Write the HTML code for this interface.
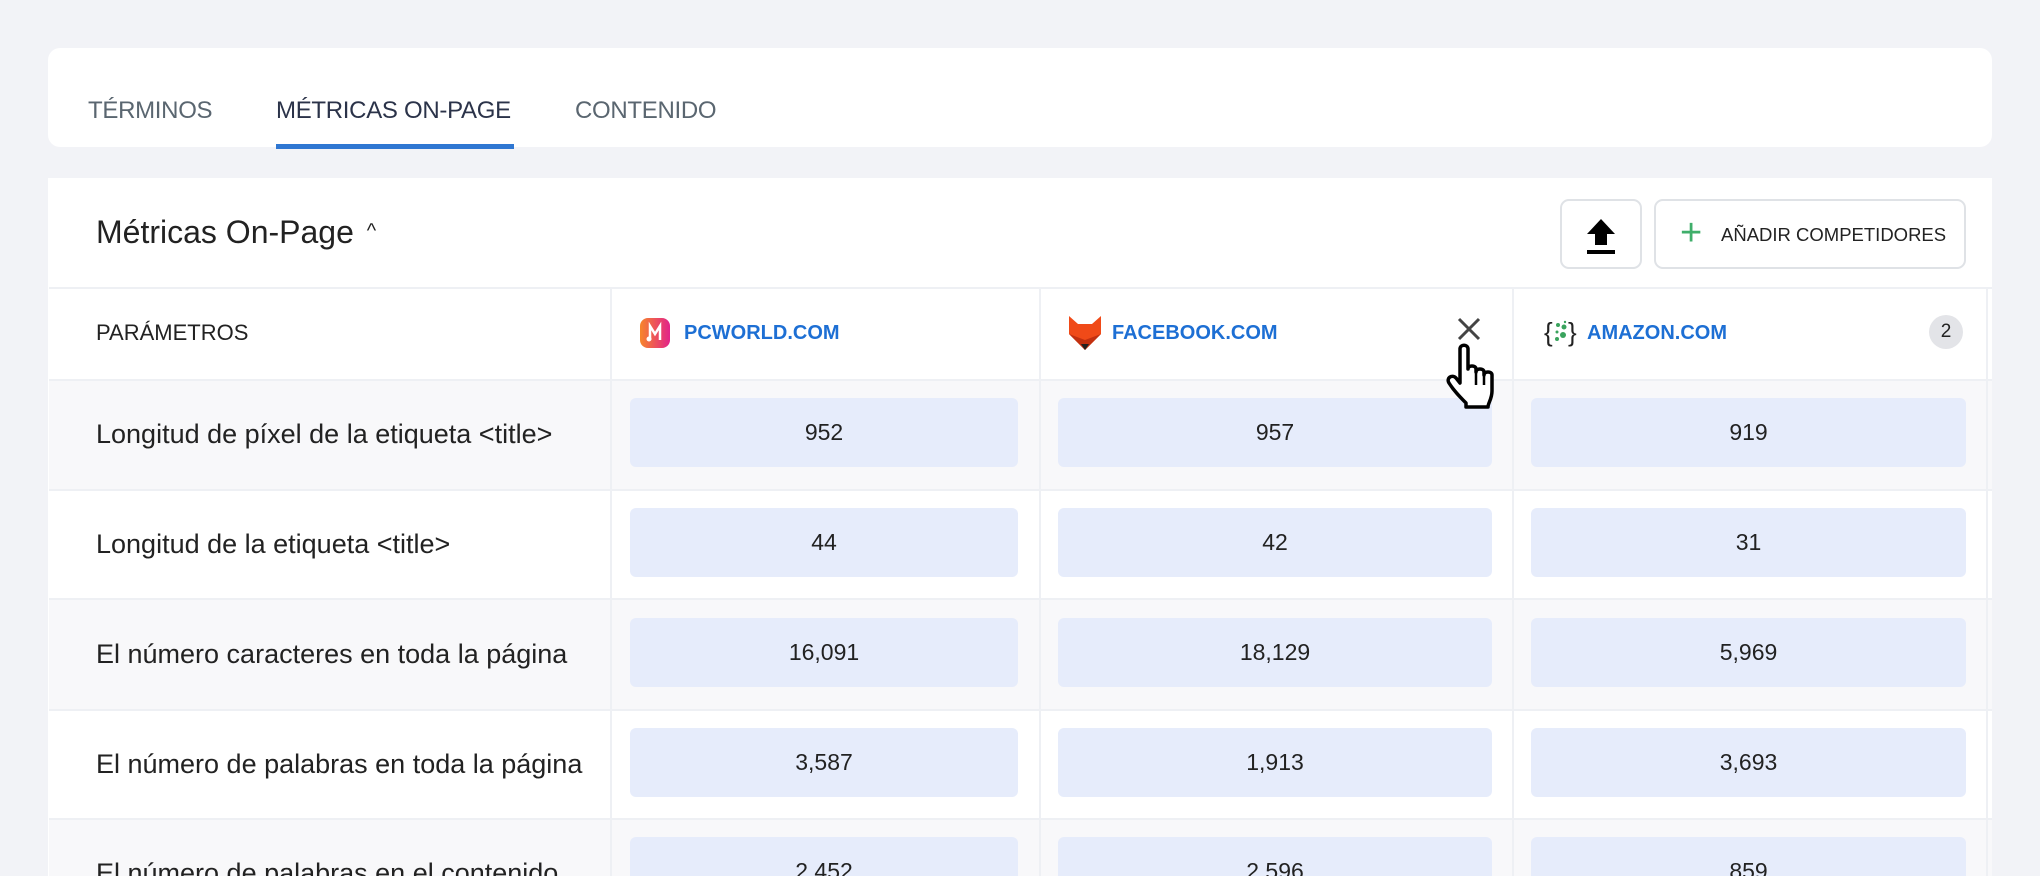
<!DOCTYPE html>
<html><head><meta charset="utf-8"><style>
*{margin:0;padding:0;box-sizing:border-box}
html,body{width:2040px;height:876px;overflow:hidden}
body{background:#f2f3f7;font-family:"Liberation Sans",sans-serif;position:relative}
#wrap{position:absolute;left:0;top:0;width:2040px;height:876px;overflow:hidden}
.abs{position:absolute}
.tabs{left:48px;top:48px;width:1944px;height:99px;background:#fff;border-radius:12px}
.tab{position:absolute;top:97px;font-size:24px;color:#5a6670;letter-spacing:-0.3px}
.card{left:48px;top:178px;width:1944px;height:700px;background:#fff}
.row{position:absolute;left:49px;width:1943px;border-top:2px solid #eef0f4}
.lbl{position:absolute;left:96px;font-size:27px;color:#222}
.vbox{position:absolute;height:69px;background:#e6ecfb;border-radius:6px;font-size:23px;color:#222;display:flex;align-items:center;justify-content:center}
.vl{position:absolute;top:288px;width:2px;height:600px;background:#eef0f4}
.dom{position:absolute;top:322px;font-size:20px;font-weight:bold;color:#1d6fd4}
.btn{position:absolute;border:2px solid #dfe2e6;border-radius:9px;background:#fff}
</style></head><body><div id="wrap">
<div class="abs tabs"></div>
<div class="tab" style="left:88px">TÉRMINOS</div>
<div class="tab" style="left:276px;color:#2b3349">MÉTRICAS ON-PAGE</div>
<div class="abs" style="left:276px;top:144px;width:238px;height:5px;background:#2f77d2"></div>
<div class="tab" style="left:575px">CONTENIDO</div>

<div class="abs card"></div>
<div class="abs" style="left:96px;top:214px;font-size:32px;color:#222">Métricas On-Page <span style="font-size:20px;position:relative;top:-6px;margin-left:4px">^</span></div>
<div class="btn" style="left:1560px;top:199px;width:82px;height:70px">
<svg width="82" height="70" viewBox="0 0 82 70" style="position:absolute;left:-2px;top:-2px"><path d="M41 20 L55 35 L47 35 L47 46 L35 46 L35 35 L27 35 Z" fill="#000"/><rect x="27" y="51" width="28" height="4" fill="#000"/></svg></div>
<div class="btn" style="left:1654px;top:199px;width:312px;height:70px">
<span style="position:absolute;left:24px;top:11px;font-size:38px;color:#3fae6a;font-weight:300">+</span>
<span style="position:absolute;left:65px;top:23px;font-size:18.5px;color:#222">AÑADIR COMPETIDORES</span></div>

<div class="row" style="top:287px;height:92px;background:#fff"></div>
<div class="row" style="top:379px;height:110px;background:#f8f8fa"></div>
<div class="row" style="top:489px;height:109px;background:#fff"></div>
<div class="row" style="top:598px;height:111px;background:#f8f8fa"></div>
<div class="row" style="top:709px;height:109px;background:#fff"></div>
<div class="row" style="top:818px;height:60px;background:#f8f8fa"></div>
<div class="vl" style="left:610px"></div>
<div class="vl" style="left:1039px"></div>
<div class="vl" style="left:1512px"></div>
<div class="vl" style="left:1986px"></div>

<div class="lbl" style="top:320px;font-size:22px;color:#222">PARÁMETROS</div>
<svg class="abs" style="left:640px;top:318px" width="30" height="30" viewBox="0 0 30 30"><defs><linearGradient id="g" x1="0" x2="1"><stop offset="0" stop-color="#f7862a"/><stop offset="1" stop-color="#e2228a"/></linearGradient></defs><rect width="30" height="30" rx="8" fill="url(#g)"/><path d="M10 22 V8 L15 16 L20 8 V22" stroke="#fff" stroke-width="2.5" fill="none"/><circle cx="9" cy="21" r="2.5" fill="#fff"/></svg>
<div class="dom" style="left:684px">PCWORLD.COM</div>
<svg class="abs" style="left:1069px;top:316px" width="32" height="34" viewBox="0 0 32 34"><path d="M0 0 L9 8 L23 8 L32 0 L32 18 L16 34 L0 18 Z" fill="#f04a18"/><path d="M0 18 L16 34 L32 18 L16 24Z" fill="#c23010"/><path d="M12 28 L16 34 L20 28Z" fill="#222"/></svg>
<div class="dom" style="left:1112px">FACEBOOK.COM</div>
<svg class="abs" style="left:1456px;top:316px" width="26" height="26" viewBox="0 0 26 26"><path d="M3 3 L23 23 M23 3 L3 23" stroke="#444" stroke-width="3"/></svg>
<svg class="abs" style="left:1544px;top:317px" width="34" height="30" viewBox="0 0 34 30"><text x="0" y="24" font-size="26" font-family="Liberation Sans" fill="#222">{</text><text x="24" y="24" font-size="26" font-family="Liberation Sans" fill="#222">}</text><g fill="#3aa35d"><circle cx="14" cy="8" r="2"/><circle cx="20" cy="10" r="2.5"/><circle cx="13" cy="15" r="1.5"/><circle cx="19" cy="18" r="3"/><circle cx="13" cy="22" r="2"/><circle cx="21" cy="5" r="1.2"/></g></svg>
<div class="dom" style="left:1587px">AMAZON.COM</div>
<div class="abs" style="left:1929px;top:315px;width:34px;height:34px;border-radius:50%;background:#e3e4e8;font-size:19px;color:#222;text-align:center;line-height:34px">2</div>

<div class="lbl" style="top:419px">Longitud de píxel de la etiqueta &lt;title&gt;</div>
<div class="vbox" style="left:630px;top:398px;width:388px">952</div>
<div class="vbox" style="left:1058px;top:398px;width:434px">957</div>
<div class="vbox" style="left:1531px;top:398px;width:435px">919</div>

<div class="lbl" style="top:529px">Longitud de la etiqueta &lt;title&gt;</div>
<div class="vbox" style="left:630px;top:508px;width:388px">44</div>
<div class="vbox" style="left:1058px;top:508px;width:434px">42</div>
<div class="vbox" style="left:1531px;top:508px;width:435px">31</div>

<div class="lbl" style="top:639px">El número caracteres en toda la página</div>
<div class="vbox" style="left:630px;top:618px;width:388px">16,091</div>
<div class="vbox" style="left:1058px;top:618px;width:434px">18,129</div>
<div class="vbox" style="left:1531px;top:618px;width:435px">5,969</div>

<div class="lbl" style="top:749px">El número de palabras en toda la página</div>
<div class="vbox" style="left:630px;top:728px;width:388px">3,587</div>
<div class="vbox" style="left:1058px;top:728px;width:434px">1,913</div>
<div class="vbox" style="left:1531px;top:728px;width:435px">3,693</div>

<div class="lbl" style="top:858px">El número de palabras en el contenido</div>
<div class="vbox" style="left:630px;top:837px;width:388px">2,452</div>
<div class="vbox" style="left:1058px;top:837px;width:434px">2,596</div>
<div class="vbox" style="left:1531px;top:837px;width:435px">859</div>

<svg class="abs" style="left:1446px;top:343px" width="62" height="68" viewBox="0 0 62 68"><path d="M14 6 C14 1 22 1 22 6 L22 26 C22 22 30 22 30 26 L30 29 C30 25 38 25 38 29 L38 32 C38 28 46 28 46 32 L46 48 C46 56 42 60 42 64 L20 64 L20 60 C14 54 8 48 3 40 C0 35 6 31 10 35 L14 40 Z" fill="#fff" stroke="#000" stroke-width="3.5" stroke-linejoin="round"/><path d="M30 29 V42 M38 32 V42" stroke="#000" stroke-width="2.5"/></svg>
</div></body></html>
